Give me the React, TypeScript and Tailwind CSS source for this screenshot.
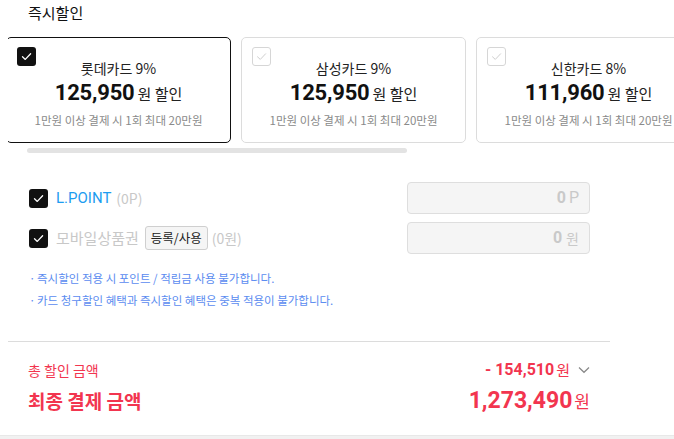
import React from "react";

const KR = { fontFamily: '"Noto Sans CJK KR", "Noto Sans", sans-serif' };

function Check({ on }: { on: boolean }) {
  return on ? (
    <div className="w-[19px] h-[19px] rounded-[3px] bg-[#111] flex items-center justify-center">
      <svg width="13" height="13" viewBox="0 0 13 13" fill="none">
        <path d="M2.5 6.8 L5.3 9.4 L10.6 3.8" stroke="#fff" strokeWidth="1.3" strokeLinecap="round" strokeLinejoin="round" />
      </svg>
    </div>
  ) : (
    <div className="w-[19px] h-[19px] rounded-[3px] bg-white border border-[#d6d6d6] flex items-center justify-center">
      <svg width="13" height="13" viewBox="0 0 13 13" fill="none">
        <path d="M2.5 6.8 L5.3 9.4 L10.6 3.8" stroke="#cfcfcf" strokeWidth="1" strokeLinecap="round" strokeLinejoin="round" />
      </svg>
    </div>
  );
}

function Card({ name, amount, on }: { name: string; amount: string; on: boolean }) {
  return (
    <div
      className={`relative shrink-0 w-[225px] h-[106px] rounded-[5px] bg-white flex flex-col items-center ${
        on ? "border-[1.5px] border-[#111]" : "border border-[#dcdcdc]"
      }`}
    >
      <div className="absolute left-[10px] top-[9px]">
        <Check on={on} />
      </div>
      <div className="mt-[20px] text-[14px] leading-[20px] text-[#222]">{name}</div>
      <div className="mt-[1px] flex items-baseline leading-[28px]">
        <span className="text-[22px] font-bold text-[#111] tracking-[-0.2px]" style={{ fontFamily: 'Roboto, "Noto Sans CJK KR", sans-serif' }}>
          {amount}
        </span>
        <span className="ml-[3px] text-[15px] text-[#222]">원 할인</span>
      </div>
      <div className="mt-[4px] text-[11.5px] leading-[16px] text-[#8a8a8a]">1만원 이상 결제 시 1회 최대 20만원</div>
    </div>
  );
}

export default function App() {
  return (
    <div className="w-[674px] h-[439px] bg-white overflow-hidden flex flex-col" style={KR}>
      <div className="pl-[28px] h-[27px] flex items-center text-[15px] text-[#111]">즉시할인</div>
      <div className="mt-[10px] ml-[8px] overflow-hidden">
        <div className="flex gap-[10px] -ml-[2px]">
          <Card name="롯데카드 9%" amount="125,950" on={true} />
          <Card name="삼성카드 9%" amount="125,950" on={false} />
          <Card name="신한카드 8%" amount="111,960" on={false} />
        </div>
      </div>
      <div className="mt-[5px] ml-[27px] w-[380px] h-[5px] rounded-full bg-[#e3e3e3]" />

      <div className="mt-[29px] pl-[29px] pr-[84px] flex flex-col gap-[8px]">
        <div className="flex items-center justify-between h-[32px]">
          <div className="flex items-center">
            <Check on={true} />
            <span className="ml-[8px] text-[15px] text-[#1d9cf0]" style={{ fontFamily: 'Roboto, "Noto Sans CJK KR", sans-serif' }}>L.POINT</span>
            <span className="ml-[5px] text-[14px] text-[#c8c8c8]">(0P)</span>
          </div>
          <div className="w-[183px] h-[32px] rounded-[4px] border border-[#dedede] bg-[#f5f5f5] flex items-center justify-end pr-[10px]">
            <span className="text-[16px] font-bold text-[#c9c9c9]" style={{ fontFamily: 'Roboto, sans-serif' }}>0</span>
            <span className="ml-[3px] text-[16px] text-[#c9c9c9]" style={{ fontFamily: 'Roboto, sans-serif' }}>P</span>
          </div>
        </div>
        <div className="flex items-center justify-between h-[32px]">
          <div className="flex items-center">
            <Check on={true} />
            <span className="ml-[8px] text-[15px] text-[#c8c8c8]">모바일상품권</span>
            <span className="ml-[6px] h-[24px] px-[5px] rounded-[3px] border border-[#cfcfcf] bg-[#f5f5f5] text-[12.5px] text-[#222] flex items-center">등록/사용</span>
            <span className="ml-[4px] text-[14px] text-[#c8c8c8]">(0원)</span>
          </div>
          <div className="w-[183px] h-[32px] rounded-[4px] border border-[#dedede] bg-[#f5f5f5] flex items-center justify-end pr-[10px]">
            <span className="text-[16px] font-bold text-[#c9c9c9]" style={{ fontFamily: 'Roboto, sans-serif' }}>0</span>
            <span className="ml-[4px] text-[14px] text-[#c9c9c9]">원</span>
          </div>
        </div>
      </div>

      <div className="mt-[16px] pl-[29px] flex flex-col gap-[5px] text-[11.5px] leading-[17px] text-[#5b8cf0]">
        <div className="flex"><span className="w-[8px]">·</span><span>즉시할인 적용 시 포인트 / 적립금 사용 불가합니다.</span></div>
        <div className="flex"><span className="w-[8px]">·</span><span>카드 청구할인 혜택과 즉시할인 혜택은 중복 적용이 불가합니다.</span></div>
      </div>

      <div className="mt-[32px] ml-[8px] w-[602px] h-px bg-[#dcdcdc]" />

      <div className="pl-[28px] pr-[84px] mt-[17px]">
        <div className="flex items-center justify-between h-[22px]">
          <span className="text-[14px] text-[#f2354f]">총 할인 금액</span>
          <div className="flex items-center">
            <span className="text-[16px] font-bold text-[#f2354f]" style={{ fontFamily: 'Roboto, sans-serif' }}>- 154,510</span>
            <span className="ml-[2px] text-[15px] text-[#f2354f]">원</span>
            <svg className="ml-[8px]" width="12" height="8" viewBox="0 0 12 8" fill="none">
              <path d="M1 1.5 L6 6.3 L11 1.5" stroke="#888" strokeWidth="1.2" />
            </svg>
          </div>
        </div>
        <div className="mt-[5px] flex items-center justify-between h-[30px]">
          <span className="text-[19px] font-bold text-[#f2354f]">최종 결제 금액</span>
          <div className="flex items-baseline">
            <span className="text-[23px] font-bold text-[#f2354f]" style={{ fontFamily: 'Roboto, sans-serif' }}>1,273,490</span>
            <span className="ml-[2px] text-[17px] text-[#f2354f]">원</span>
          </div>
        </div>
      </div>

      <div className="mt-auto h-[4px] bg-[#f1f1f1] border-t border-[#e8e8e8]" />
    </div>
  );
}
